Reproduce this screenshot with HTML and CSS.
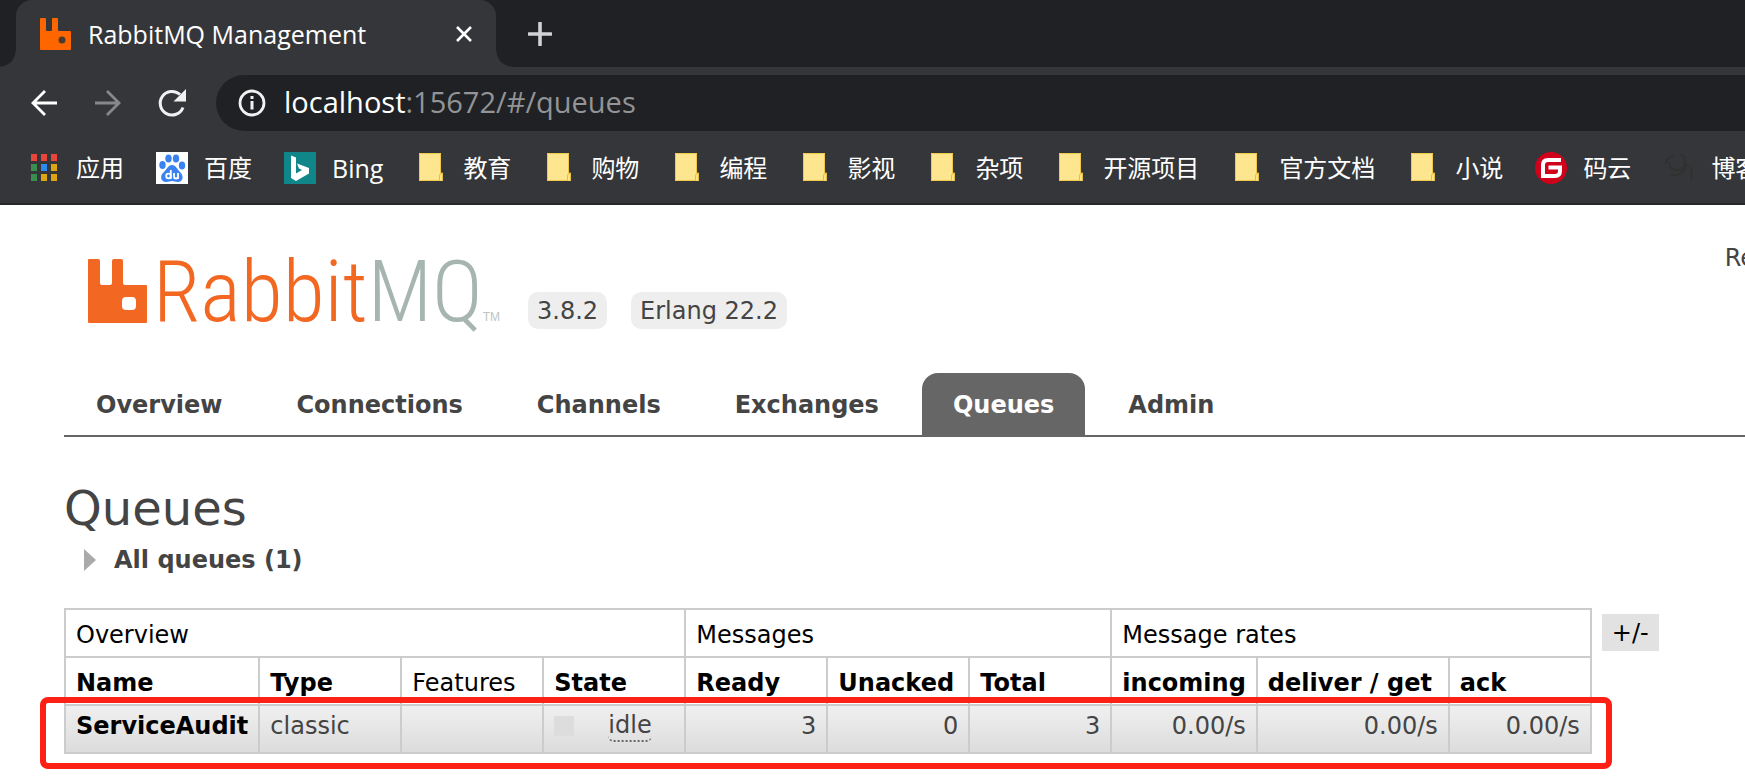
FILE: index.html
```html
<!DOCTYPE html>
<html lang="zh-CN">
<head>
<meta charset="utf-8">
<title>RabbitMQ Management</title>
<link rel="stylesheet" href="styles.css">
</head>
<body>
<svg class="defs" width="0" height="0" aria-hidden="true">
  <symbol id="folder" viewBox="0 0 32 32">
    <path d="M4 1h22v20h2v8H4z" fill="#fbe084"/>
    <path d="M4 1h22v20q-3 1-2 8H4z" fill="#fde68f"/>
    <path d="M4.500 1.500h21v19.500h2v7.500h-23z" fill="none" stroke="#f0c84a"/>
    <path d="M24.500 28.500v-5q0-2 1.500-2t1.500 2v5" fill="#ffe583" stroke="#e8bd3d"/>
  </symbol>
</svg>
<header class="browser">
  <div class="tabstrip">
    <div class="tab">
      <svg class="favicon" viewBox="0 0 32 32"><path d="M0 1q0-1 1-1h4q1 0 1 1v11q0 1 1 1h4q1 0 1-1V1q0-1 1-1h4q1 0 1 1v11q0 1 1 1h11q1 0 1 1v17q0 1-1 1H1q-1 0-1-1z" fill="#f60"/><circle cx="22" cy="22" r="3.500" fill="#4a3a30"/></svg>
      <span class="tab-title">RabbitMQ Management</span>
      <button class="tab-close" aria-label="Close tab"><svg viewBox="0 0 16 16"><path d="M1 1l14 14M15 1L1 15" stroke="#fff" stroke-width="2.600"/></svg></button>
    </div>
    <button class="tab-new" aria-label="New tab"><svg viewBox="0 0 24 24"><path d="M12 1v22M1 12h22" stroke="#d0d2d5" stroke-width="3.600" stroke-linecap="round"/></svg></button>
  </div>
  <div class="toolbar">
    <button class="tool" aria-label="Back"><svg viewBox="0 0 32 32"><path d="M29 16H5M17 4L5 16l12 12" fill="none" stroke="#fff" stroke-width="2.800"/></svg></button>
    <button class="tool" aria-label="Forward"><svg viewBox="0 0 32 32"><path d="M3 16h24M15 4l12 12-12 12" fill="none" stroke="#87888b" stroke-width="2.800"/></svg></button>
    <button class="tool" aria-label="Reload"><svg viewBox="0 0 32 32"><path d="M27 20.500A11.800 11.800 0 1 1 24 7.500" fill="none" stroke="#f1f1f2" stroke-width="3"/><path d="M30 2v12.500H17.500z" fill="#f1f1f2"/></svg></button>
    <div class="omnibox">
      <svg class="info" viewBox="0 0 32 32"><circle cx="16" cy="16" r="12" fill="none" stroke="#f1f1f2" stroke-width="2.800"/><path d="M16 14v8.500M16 9v3" stroke="#f1f1f2" stroke-width="3"/></svg>
      <div class="url" role="textbox" aria-label="Address">localhost<span class="url-rest">:15672/#/queues</span></div>
    </div>
  </div>
  <nav class="bookmarks">
    <a href="#"><svg viewBox="0 0 32 32"><path d="M3 2h6v7H3zM13 2h6v7h-6zM23 2h6v7h-6z" fill="#e8453c"/><path d="M3 12h6v7H3zM3 22h6v7H3z" fill="#3c8d50"/><path d="M13 12h6v7h-6z" fill="#2f8af0"/><path d="M23 12h6v7h-6zM13 22h6v7h-6zM23 22h6v7h-6z" fill="#dba60f"/></svg>应用</a>
    <a href="#"><svg viewBox="0 0 32 32"><path d="M0 0h32v32H0z" fill="#fff"/><g fill="#3a82f0"><ellipse cx="6.500" cy="13" rx="3.200" ry="4"/><ellipse cx="12.500" cy="6.500" rx="3.200" ry="4"/><ellipse cx="20" cy="6.500" rx="3.200" ry="4"/><ellipse cx="26" cy="13.500" rx="3.200" ry="4"/><path d="M16 13c4 0 5 4 8 7 5 5 2 10-2 10-3 0-4-1-6-1s-3 1-6 1c-5 0-7-6-2-10 3-3 4-7 8-7z"/></g><g fill="none" stroke="#fff" stroke-width="1.800"><circle cx="12.500" cy="24" r="2.300"/><path d="M14.800 18v9M18 21v3.500q0 2 2 2t2-2V21v6"/></g></svg>百度</a>
    <a href="#" class="latin"><svg viewBox="0 0 32 32"><path d="M0 0h32v32H0z" fill="#10868a"/><path d="M7 3.500l5 2v16l6-3.500-3-1.500-2-5 12 4.500v5.500L12 29l-5-3z" fill="#fff"/></svg>Bing</a>
    <a href="#"><svg><use href="#folder"/></svg>教育</a>
    <a href="#"><svg><use href="#folder"/></svg>购物</a>
    <a href="#"><svg><use href="#folder"/></svg>编程</a>
    <a href="#"><svg><use href="#folder"/></svg>影视</a>
    <a href="#"><svg><use href="#folder"/></svg>杂项</a>
    <a href="#"><svg><use href="#folder"/></svg>开源项目</a>
    <a href="#"><svg><use href="#folder"/></svg>官方文档</a>
    <a href="#"><svg><use href="#folder"/></svg>小说</a>
    <a href="#"><svg viewBox="0 0 32 32"><circle cx="16" cy="16" r="16" fill="#d0021b"/><path d="M26 8H13q-5 0-5 5v11h12q5 0 5-5v-3.500H13.500" fill="none" stroke="#fff" stroke-width="4"/></svg>码云</a>
    <a href="#"><svg viewBox="0 0 32 32" fill="none" stroke="#323130" stroke-width="2"><path d="M2 12q3-8 10-8M6 10q0 8 8 8t8-8-5-7M8 23q12 2 16-11M27 14q3 5 1 14"/></svg>博客</a>
  </nav>
</header>
<div class="page">
  <div class="masthead">
    <div class="logo">
      <svg viewBox="0 0 60 65"><path fill-rule="evenodd" d="M0 2q0-1 1-1h9q2 0 2 2v22q0 2 2 2h8q2 0 2-2V3q0-2 2-2h7q2 0 2 2v22q0 2 2 2h21q1 0 1 1v36q0 1-1 1H1q-1 0-1-1zM38 39q-4 0-4 4v5q0 4 4 4h6q4 0 4-4v-5q0-4-4-4z" fill="#f26722"/></svg>
      <span class="word">Rabbit<span class="mq">MQ</span></span><span class="tm">TM</span>
    </div>
    <span class="badge">3.8.2</span>
    <span class="badge">Erlang 22.2</span>
    <span class="status">Re</span>
  </div>
  <nav class="menu">
    <a href="#">Overview</a>
    <a href="#">Connections</a>
    <a href="#">Channels</a>
    <a href="#">Exchanges</a>
    <a href="#" class="selected">Queues</a>
    <a href="#">Admin</a>
  </nav>
  <main>
    <h1>Queues</h1>
    <h2><button class="toggle"><svg viewBox="0 0 12 22"><path d="M0 0l12 11L0 22z" fill="#aaa"/></svg>All queues (1)</button></h2>
    <div class="listing">
      <div class="table-wrap">
        <table>
          <thead>
            <tr><th colspan="4">Overview</th><th colspan="3">Messages</th><th colspan="3">Message rates</th></tr>
            <tr>
              <th class="sort">Name</th><th class="sort">Type</th><th>Features</th><th class="sort">State</th>
              <th class="sort">Ready</th><th class="sort">Unacked</th><th class="sort">Total</th>
              <th class="sort">incoming</th><th class="sort wide">deliver / get</th><th class="sort">ack</th>
            </tr>
          </thead>
          <tbody>
            <tr>
              <td><a href="#">ServiceAudit</a></td><td>classic</td><td></td>
              <td><span class="state"><i class="swatch"></i><abbr title="idle">idle</abbr></span></td>
              <td class="num">3</td><td class="num">0</td><td class="num">3</td>
              <td class="num">0.00/s</td><td class="num">0.00/s</td><td class="num">0.00/s</td>
            </tr>
          </tbody>
        </table>
        <div class="highlight"></div>
      </div>
      <button class="columns">+/-</button>
    </div>
  </main>
</div>
</body>
</html>
```
FILE: styles.css
```css
* { box-sizing: border-box; }
body {
  margin: 0;
  background: #fff;
  color: #444;
  font: 24px/32px "DejaVu Sans", Verdana, sans-serif;
  overflow-x: hidden;
}
button { margin: 0; padding: 0; border: 0; background: none; font: inherit; color: inherit; }
a { color: inherit; text-decoration: none; }
svg { display: block; flex: none; }
.defs { position: absolute; }

.browser {
  background: #35363a;
  color: #fff;
  font-family: "Open Sans", "Noto Sans CJK SC", sans-serif;
  border-bottom: 2px solid #26272b;
}
.tabstrip { display: flex; align-items: stretch; height: 67px; padding-left: 16px; background: #202124; }
.tab {
  position: relative;
  display: flex;
  align-items: center;
  width: 480px;
  padding: 0 24px;
  gap: 16px;
  background: #35363a;
  border-radius: 16px 16px 0 0;
}
.tab::before, .tab::after {
  content: "";
  position: absolute;
  bottom: 0;
  width: 16px;
  height: 16px;
}
.tab::before { right: 100%; background: radial-gradient(circle at 0 0, #202124 15px, #35363a 16px); }
.tab::after { left: 100%; background: radial-gradient(circle at 100% 0, #202124 15px, #35363a 16px); }
.favicon { width: 32px; height: 32px; }
.tab-title { flex: 1; font-size: 25px; white-space: nowrap; }
.tab-close svg { width: 16px; height: 16px; }
.tab-new { margin-left: 32px; }
.tab-new svg { width: 24px; height: 24px; }

.toolbar { display: flex; align-items: center; padding: 8px 0 8px 28px; gap: 32px; }
.tool svg, .info { width: 32px; height: 32px; }
.omnibox {
  display: flex;
  align-items: center;
  flex: 1;
  height: 56px;
  margin-left: -4px;
  padding-left: 20px;
  gap: 16px;
  background: #202124;
  border-radius: 28px 0 0 28px;
}
.url { padding-bottom: 2px; font-size: 29px; white-space: nowrap; }
.url-rest { color: #929497; }

.bookmarks { display: flex; gap: 32px; height: 64px; padding: 0 0 6px 28px; overflow: hidden; }
.bookmarks a { display: flex; align-items: center; flex: none; gap: 16px; }
.bookmarks .latin { font-size: 25px; }
.bookmarks svg { width: 32px; height: 32px; }

.page { padding: 48px 0 28px 64px; }
.masthead { display: flex; align-items: flex-end; gap: 24px; height: 76px; padding-left: 24px; }
.logo { display: flex; align-items: flex-end; width: 416px; padding-bottom: 6px; color: #f26722; }
.logo svg { width: 60px; height: 65px; }
.word {
  margin-left: 5px;
  font: 300 86px/62px "Roboto Condensed", "Liberation Sans Narrow", sans-serif;
}
.mq { color: #a6b5b0; }
.tm { font: 12px/12px "Liberation Sans", sans-serif; color: #bcc6c3; }
.badge { padding: 3px 9px 2px; background: #eee; border-radius: 10px; white-space: nowrap; }
.status { align-self: flex-start; margin: -11px -10px 0 auto; }

.menu { display: flex; gap: 12px; margin-top: 44px; border-bottom: 2px solid #666; }
.menu a { padding: 16px 31px 14px 32px; font-weight: bold; border-radius: 16px 16px 0 0; }
.menu a + a { padding-left: 31px; }
.menu .selected { background: #666; color: #fff; }

h1 { margin: 41px 0 0; font-size: 48px; line-height: 60px; font-weight: normal; }
h2 { margin: 6px 0 0 20px; font-size: 24px; line-height: 32px; }
.toggle { display: flex; align-items: center; gap: 18px; }
.toggle svg { width: 12px; height: 22px; }

.listing { display: flex; align-items: flex-start; gap: 10px; margin-top: 32px; }
.table-wrap { position: relative; }
table { border-collapse: collapse; }
th, td {
  min-width: 142px;
  height: 48px;
  padding: 4px 10px;
  border: 2px solid #ccc;
  text-align: left;
  white-space: nowrap;
}
th { padding: 8px 10px 4px; color: #000; font-weight: normal; }
.sort, td a { color: #000; font-weight: bold; }
.wide { min-width: 192px; }
tbody tr { background: linear-gradient(#f0f0f0, #dcdcdc); }
td { vertical-align: top; }
.num { text-align: right; }
.state { display: flex; align-items: center; gap: 34px; }
.swatch { width: 20px; height: 20px; background: #ddd; }
abbr { line-height: 30px; text-decoration: none; border-bottom: 2px dotted #666; border-radius: 6px; }
.highlight {
  position: absolute;
  left: -24px;
  right: -20px;
  bottom: -15px;
  height: 72px;
  border: 6px solid #fd2015;
  border-radius: 8px;
}
.columns { margin-top: 6px; padding: 3px 10px 2px; background: #e2e2e2; color: #000; }
```
